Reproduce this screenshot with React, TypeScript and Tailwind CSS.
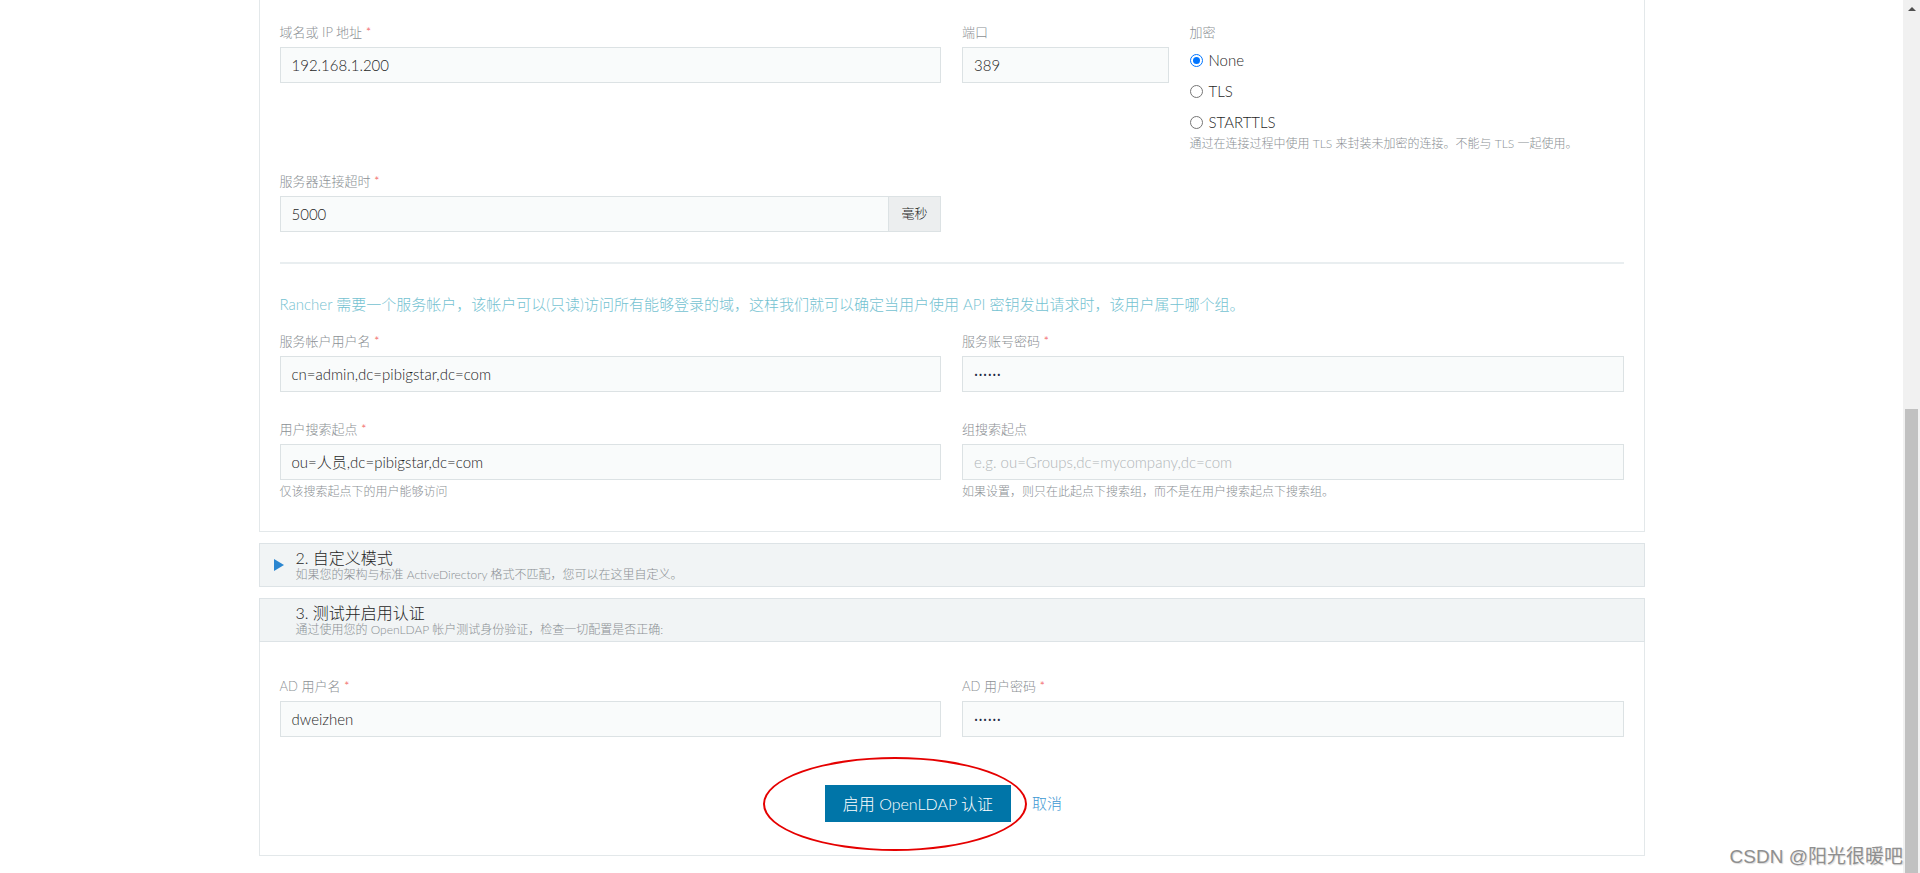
import React from "react";

type FieldProps = {
  label: string;
  required?: boolean;
  value?: string;
  placeholder?: string;
  help?: string;
  password?: boolean;
};

function Label({ label, required }: { label: string; required?: boolean }) {
  return (
    <div className="mb-[6px] text-[13px] leading-[18px] text-[#8b9094]">
      {label}
      {required && <span className="text-[#f04c4c]"> *</span>}
    </div>
  );
}

function Field({ label, required, value, placeholder, help, password }: FieldProps) {
  return (
    <div className="flex flex-col">
      <Label label={label} required={required} />
      <div className="flex h-[36px] items-center border border-[#dce2e4] bg-[#f9fbfb] px-[11px]">
        {password ? (
          <span className="text-[7px] tracking-[0.5px] text-[#1f2a44]">••••••</span>
        ) : value ? (
          <span className="text-[15px] text-[#1f1f1f]">{value}</span>
        ) : (
          <span className="text-[15px] text-[#b1b6b9]">{placeholder}</span>
        )}
      </div>
      {help && <div className="mt-[4px] text-[12px] leading-[16px] text-[#8b9094]">{help}</div>}
    </div>
  );
}

function Radio({ label, checked }: { label: string; checked?: boolean }) {
  return (
    <div className="flex h-[20px] items-center gap-[6px]">
      {checked ? (
        <span className="flex h-[13px] w-[13px] items-center justify-center rounded-full border-[1.5px] border-[#0075ff]">
          <span className="h-[7px] w-[7px] rounded-full bg-[#0075ff]" />
        </span>
      ) : (
        <span className="h-[13px] w-[13px] rounded-full border border-[#767676]" />
      )}
      <span className="text-[15px] text-[#1f1f1f]">{label}</span>
    </div>
  );
}

function SectionHeader({ title, sub, arrow }: { title: string; sub: string; arrow?: boolean }) {
  return (
    <div className="flex h-[44px] items-center border border-[#dde3e6] bg-[#f1f4f5]">
      <div className="flex w-[36px] justify-center pl-[3px]">
        {arrow && (
          <span className="h-0 w-0 border-y-[6px] border-l-[10px] border-y-transparent border-l-[#2b86d0]" />
        )}
      </div>
      <div className="flex flex-col">
        <div className="text-[16px] leading-[18px] text-[#1f1f1f]">{title}</div>
        <div className="text-[12px] leading-[15px] text-[#8b9094]">{sub}</div>
      </div>
    </div>
  );
}

export default function App() {
  return (
    <div className="flex h-[873px] overflow-hidden bg-white font-['Lato','Noto_Sans_CJK_SC',sans-serif] font-light">
      <div className="relative flex-1">
        {/* section 1 body */}
        <div className="mx-auto w-[1386px] border-x border-b border-[#e3e8ea] px-[20px] pt-[23px] pb-[31px]">
          <div className="grid grid-cols-6 gap-x-[21px] gap-y-[20px]">
            <div className="col-span-3">
              <Field label="域名或 IP 地址" required value="192.168.1.200" />
            </div>
            <div className="col-span-1">
              <Field label="端口" value="389" />
            </div>
            <div className="col-span-2">
              <Label label="加密" />
              <div className="mt-[9px] flex flex-col gap-[11px]">
                <Radio label="None" checked />
                <Radio label="TLS" />
                <Radio label="STARTTLS" />
              </div>
              <div className="mt-[4px] text-[12px] leading-[16px] text-[#8b9094]">
                通过在连接过程中使用 TLS 来封装未加密的连接。不能与 TLS 一起使用。
              </div>
            </div>
            <div className="col-span-3">
              <Label label="服务器连接超时" required />
              <div className="flex h-[36px]">
                <div className="flex flex-1 items-center border border-[#dce2e4] bg-[#f9fbfb] px-[11px] text-[15px] text-[#1f1f1f]">
                  5000
                </div>
                <div className="flex w-[52px] items-center justify-center border-y border-r border-[#dce2e4] bg-[#eceeef] text-[13px] text-[#1f1f1f]">
                  毫秒
                </div>
              </div>
            </div>
          </div>

          <div className="mt-[30px] h-[2px] bg-[#e9eef0]" />

          <div className="mt-[29px] text-[15px] leading-[22px] text-[#74c2d1]">
            Rancher 需要一个服务帐户，该帐户可以(只读)访问所有能够登录的域，这样我们就可以确定当用户使用 API 密钥发出请求时，该用户属于哪个组。
          </div>

          <div className="mt-[17px] grid grid-cols-2 gap-x-[21px] gap-y-[28px]">
            <Field label="服务帐户用户名" required value="cn=admin,dc=pibigstar,dc=com" />
            <Field label="服务账号密码" required password />
            <Field
              label="用户搜索起点"
              required
              value="ou=人员,dc=pibigstar,dc=com"
              help="仅该搜索起点下的用户能够访问"
            />
            <Field
              label="组搜索起点"
              placeholder="e.g. ou=Groups,dc=mycompany,dc=com"
              help="如果设置，则只在此起点下搜索组，而不是在用户搜索起点下搜索组。"
            />
          </div>
        </div>

        {/* section 2 */}
        <div className="mx-auto mt-[11px] w-[1386px]">
          <SectionHeader
            arrow
            title="2. 自定义模式"
            sub="如果您的架构与标准 ActiveDirectory 格式不匹配，您可以在这里自定义。"
          />
        </div>

        {/* section 3 */}
        <div className="mx-auto mt-[11px] w-[1386px]">
          <SectionHeader title="3. 测试并启用认证" sub="通过使用您的 OpenLDAP 帐户测试身份验证，检查一切配置是否正确:" />
          <div className="border-x border-b border-[#e3e8ea] px-[20px] pt-[35px] pb-[33px]">
            <div className="grid grid-cols-2 gap-x-[21px]">
              <Field label="AD 用户名" required value="dweizhen" />
              <Field label="AD 用户密码" required password />
            </div>
            <div className="mt-[48px] flex items-center justify-center pr-[16px]">
              <div className="relative">
                <button className="h-[37px] w-[186px] bg-[#0075a8] text-[16px] text-white">
                  启用 OpenLDAP 认证
                </button>
                <div className="pointer-events-none absolute -left-[62px] -top-[28px] h-[94px] w-[264px] rounded-[50%] border-2 border-[#e50000]" />
              </div>
              <span className="ml-[21px] text-[15px] text-[#3d98d3]">取消</span>
            </div>
          </div>
        </div>

        <div className="absolute bottom-[4px] right-0 font-['Liberation_Sans','Noto_Sans_CJK_SC',sans-serif] font-normal text-[19px] leading-[24px] text-[#8f8f8f] [text-shadow:1px_1px_1px_rgba(0,0,0,0.15)]">
          CSDN @阳光很暖吧
        </div>
      </div>

      {/* scrollbar */}
      <div className="flex w-[17px] flex-col bg-[#f1f1f1]">
        <div className="flex h-[17px] items-center justify-center">
          <span className="h-0 w-0 border-x-[4px] border-b-[4px] border-x-transparent border-b-[#505050]" />
        </div>
        <div className="mx-[2px] mt-[392px] flex-1 bg-[#c1c1c1]" />
      </div>
    </div>
  );
}
